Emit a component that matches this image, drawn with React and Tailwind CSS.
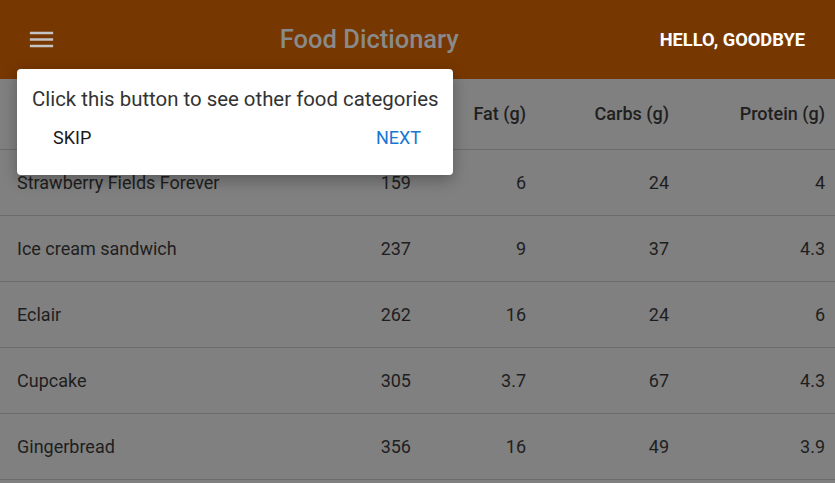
import React from "react";

const rows = [
  ["Strawberry Fields Forever", "159", "6", "24", "4"],
  ["Ice cream sandwich", "237", "9", "37", "4.3"],
  ["Eclair", "262", "16", "24", "6"],
  ["Cupcake", "305", "3.7", "67", "4.3"],
  ["Gingerbread", "356", "16", "49", "3.9"],
];

export default function App() {
  return (
    <div
      className="relative w-[835px] h-[483px] overflow-hidden bg-[#808080]"
      style={{ fontFamily: "Roboto, 'Liberation Sans', sans-serif" }}
    >
      {/* App bar */}
      <header className="h-[79px] bg-[#773700] flex items-center pl-[26px] pr-[30px]">
        <svg width="31" height="31" viewBox="0 0 24 24" className="text-[#c4c4c4]">
          <path d="M3 18h18v-2H3v2zm0-5h18v-2H3v2zm0-7v2h18V6H3z" fill="currentColor" />
        </svg>
        <h1 className="flex-1 text-center text-[25.5px] font-medium text-[#8a8a8a] pl-[22px]">
          Food Dictionary
        </h1>
        <span className="text-white font-bold text-[18.3px]">HELLO, GOODBYE</span>
      </header>

      {/* Table */}
      <table className="w-full border-collapse text-[18px] text-[#1e1e1e]">
        <thead>
          <tr className="h-[70px] border-b border-[#6c6c6c]">
            <th className="text-left font-medium pl-[17px]">Dessert (100g serving)</th>
            <th className="text-right font-medium w-[120px]">Calories</th>
            <th className="text-right font-medium w-[115px]">Fat (g)</th>
            <th className="text-right font-medium w-[143px]">Carbs (g)</th>
            <th className="text-right font-medium w-[166px] pr-[10px]">Protein (g)</th>
          </tr>
        </thead>
        <tbody>
          {rows.map((r) => (
            <tr key={r[0]} className="h-[66px] border-b border-[#6c6c6c]">
              <td className="pl-[17px] pt-[1px]">{r[0]}</td>
              <td className="text-right pt-[1px]">{r[1]}</td>
              <td className="text-right pt-[1px]">{r[2]}</td>
              <td className="text-right pt-[1px]">{r[3]}</td>
              <td className="text-right pr-[10px] pt-[1px]">{r[4]}</td>
            </tr>
          ))}
        </tbody>
      </table>

      {/* Tour popover */}
      <div className="absolute left-[17px] top-[69px] w-[436px] h-[106px] bg-white rounded-[4px] shadow-[0_5px_15px_rgba(0,0,0,0.3)] pl-[15px] pt-[17px]">
        <p className="text-[20.4px] text-[#333] leading-[26px] whitespace-nowrap">
          Click this button to see other food categories
        </p>
        <div className="flex justify-between mt-[14px] pl-[21px] pr-[32px] text-[18px] leading-[24px]">
          <button className="text-[#1a1a1a]">SKIP</button>
          <button className="text-[#1976d2]">NEXT</button>
        </div>
      </div>
    </div>
  );
}
